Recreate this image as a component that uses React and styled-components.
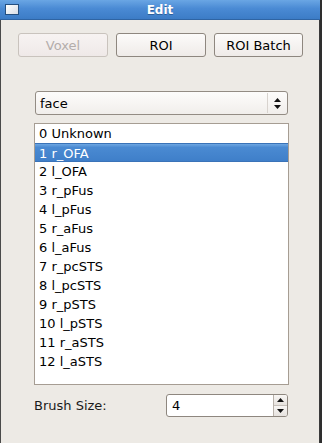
import React from "react";
import styled, { createGlobalStyle } from "styled-components";

/**
 * Resets the page
 */
const GlobalStyle = createGlobalStyle`
  html, body {
    margin: 0;
    padding: 0;
    background: #2e2e2e;
    width: 322px;
    height: 443px;
    overflow: hidden;
  }
  * {
    box-sizing: border-box;
  }
`;

const font = `"DejaVu Sans", "Noto Sans", sans-serif`;

/**
 * Styles the window frame
 */
const Window = styled.div`
  width: 320px;
  height: 443px;
  background: #edeae5;
  border-left: 1px solid #4a4a4a;
  border-right: 1px solid #3a3a3a;
  display: flex;
  flex-direction: column;
  font-family: ${font};
  font-size: 13px;
  color: #000;
`;

const TitleBar = styled.div`
  height: 20px;
  margin: 0 -1px;
  background: linear-gradient(#6aa6e4, #4a8ad4 45%, #3c7cc6);
  border-bottom: 1px solid #2f64a3;
  display: flex;
  align-items: center;
  position: relative;
  padding-left: 5px;
`;

const WinIcon = styled.div`
  width: 14px;
  height: 11px;
  border: 1px solid #244f80;
  background: linear-gradient(135deg, #ffffff, #d8dde6);
`;

const Title = styled.div`
  position: absolute;
  left: 0;
  right: 0;
  text-align: center;
  color: #fff;
  font-weight: bold;
  font-size: 12px;
  text-shadow: 0 1px 0 #2d5f9a;
`;

/**
 * Styles the top buttons row
 */
const ButtonRow = styled.div`
  display: grid;
  grid-template-columns: 90px 90px 89px;
  column-gap: 8px;
  margin: 13px 0 0 17px;
`;

const Button = styled.div`
  height: 24px;
  border: 1px solid ${(p) => (p.disabled ? "#c9c3bd" : "#8e877f")};
  border-radius: 3px;
  background: ${(p) =>
    p.disabled
      ? "linear-gradient(#f7f3f2, #efe9e8)"
      : "linear-gradient(#fcfbfa, #efebe8)"};
  color: ${(p) => (p.disabled ? "#b3adab" : "#000")};
  display: flex;
  align-items: center;
  justify-content: center;
`;

/**
 * Styles the form section
 */
const Form = styled.div`
  width: 255px;
  margin: 34px 0 0 33px;
  display: flex;
  flex-direction: column;
`;

const Combo = styled.div`
  height: 24px;
  margin: 0 1px;
  border: 1px solid #938c84;
  border-radius: 3px;
  background: linear-gradient(#fdfcfb, #f1eeeb);
  display: flex;
  align-items: center;
`;

const ComboText = styled.div`
  flex: 1;
  padding-left: 4px;
`;

const ComboSep = styled.div`
  width: 1px;
  height: 20px;
  background: #d8d3ce;
`;

const ComboArrows = styled.div`
  width: 19px;
  display: flex;
  justify-content: center;
  align-items: center;
`;

const List = styled.div`
  margin-top: 8px;
  height: 262px;
  border: 1px solid #a69d93;
  background: #fff;
  display: flex;
  flex-direction: column;
`;

const Item = styled.div`
  height: 19px;
  line-height: 19px;
  padding-left: 4px;
  white-space: nowrap;
  color: ${(p) => (p.selected ? "#fff" : "#000")};
  background: ${(p) =>
    p.selected ? "linear-gradient(#6ea7e2, #4a8ad2 20%, #3f7fc9)" : "none"};
  border-top: ${(p) => (p.selected ? "1px solid #3a73b8" : "none")};
  border-bottom: ${(p) => (p.selected ? "1px solid #3a73b8" : "none")};
`;

const BrushRow = styled.div`
  margin-top: 9px;
  display: flex;
  align-items: center;
  justify-content: space-between;
`;

const Label = styled.div`
  color: #1a1a1a;
`;

const SpinBox = styled.div`
  width: 122px;
  height: 23px;
  margin-right: 1px;
  border: 1px solid #8e877f;
  border-radius: 3px;
  background: #fff;
  display: flex;
  overflow: hidden;
`;

const SpinValue = styled.div`
  flex: 1;
  padding-left: 5px;
  display: flex;
  align-items: center;
`;

const SpinButtons = styled.div`
  width: 14px;
  border-left: 1px solid #b8b1aa;
  display: flex;
  flex-direction: column;
`;

const SpinButton = styled.div`
  flex: 1;
  background: linear-gradient(#f8f6f4, #e6e2de);
  display: flex;
  align-items: center;
  justify-content: center;
  border-top: ${(p) => (p.down ? "1px solid #c6c0ba" : "none")};
`;

const labels = [
  "0 Unknown",
  "1 r_OFA",
  "2 l_OFA",
  "3 r_pFus",
  "4 l_pFus",
  "5 r_aFus",
  "6 l_aFus",
  "7 r_pcSTS",
  "8 l_pcSTS",
  "9 r_pSTS",
  "10 l_pSTS",
  "11 r_aSTS",
  "12 l_aSTS",
];

const Tri = ({ down }) => (
  <svg width="7" height="4" viewBox="0 0 7 4">
    <path d={down ? "M0 0h7L3.5 4z" : "M3.5 0L7 4H0z"} fill="#111" />
  </svg>
);

const App = () => {
  return (
    <>
      <GlobalStyle />
      <Window>
        <TitleBar>
          <WinIcon />
          <Title>Edit</Title>
        </TitleBar>
        <ButtonRow>
          <Button disabled>Voxel</Button>
          <Button>ROI</Button>
          <Button>ROI Batch</Button>
        </ButtonRow>
        <Form>
          <Combo>
            <ComboText>face</ComboText>
            <ComboSep />
            <ComboArrows>
              <svg width="7" height="11" viewBox="0 0 7 11">
                <path d="M3.5 0L7 4H0z M0 7h7L3.5 11z" fill="#111" />
              </svg>
            </ComboArrows>
          </Combo>
          <List>
            {labels.map((l, i) => (
              <Item key={l} selected={i === 1}>
                {l}
              </Item>
            ))}
          </List>
          <BrushRow>
            <Label>Brush Size:</Label>
            <SpinBox>
              <SpinValue>4</SpinValue>
              <SpinButtons>
                <SpinButton>
                  <Tri />
                </SpinButton>
                <SpinButton down>
                  <Tri down />
                </SpinButton>
              </SpinButtons>
            </SpinBox>
          </BrushRow>
        </Form>
      </Window>
    </>
  );
};

export default App;
